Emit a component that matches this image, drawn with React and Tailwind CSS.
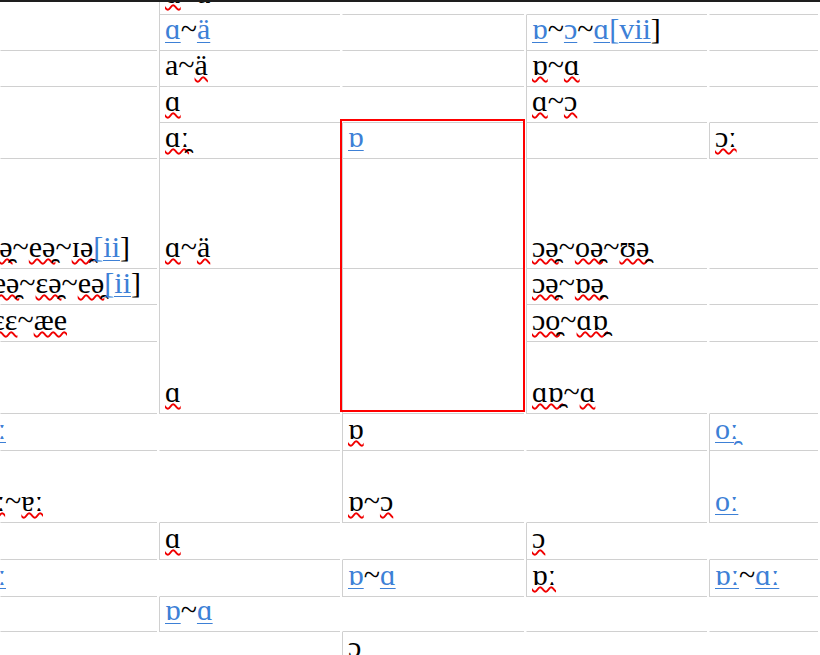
const BR = '\u032F';

// red spell-check squiggle
function Sq({ children }) {
  return (
    <span className="underline decoration-wavy decoration-[#f00000] decoration-[1.5px] underline-offset-[1px] [text-decoration-skip-ink:none]">
      {children}
    </span>
  );
}

// blue link
function A({ children }) {
  return <span className="text-[#3d80d6] underline decoration-1 underline-offset-[3px]">{children}</span>;
}

function Cell({ pos, line = false, bottom = true, end, children }) {
  return (
    <div
      className={`mr-[2px] flex flex-col justify-end pl-[5px] border-l border-[#d0d0d0] ${line ? '' : 'border-l-transparent'} ${bottom ? 'border-b pb-[6px]' : ''} ${pos}`}
    >
      {end ? (
        <div className={`flex justify-end whitespace-nowrap ${end}`}>
          <span>{children}</span>
        </div>
      ) : (
        <div className="whitespace-nowrap">{children}</div>
      )}
    </div>
  );
}

export default function App() {
  return (
    <div className="relative h-[655px] w-[820px] overflow-hidden bg-white text-black">
      <div className="absolute left-0 right-0 top-0 z-10 h-[2px] bg-[#1e1e1e]" />

      <div className="mt-[-21px] grid grid-cols-[159px_183px_184px_183px_1fr] grid-rows-[36px_36px_36px_36px_36px_110px_36px_37px_72px_37px_72px_37px_37px_35px_36px] [font-family:'Liberation_Serif','DejaVu_Serif',serif] text-[30px] leading-[30px]">
        {/* column 0 */}
        <Cell pos="col-start-1 row-start-1 row-span-2" />
        <Cell pos="col-start-1 row-start-3" />
        <Cell pos="col-start-1 row-start-4 row-span-2" />
        <Cell pos="col-start-1 row-start-6" end="pr-[27px]">
          <Sq>ə{BR}</Sq>~<Sq>eə{BR}</Sq>~<Sq>ɪə{BR}</Sq>
          <A>[ii</A>]
        </Cell>
        <Cell pos="col-start-1 row-start-7" end="pr-[16px]">
          <Sq>eə{BR}</Sq>~<Sq>ɛə{BR}</Sq>~<Sq>eə{BR}</Sq>
          <A>[ii</A>]
        </Cell>
        <Cell pos="col-start-1 row-start-8" end="pr-[90px]">
          <Sq>ɛɛ</Sq>~<Sq>æe</Sq>
        </Cell>
        <Cell pos="col-start-1 row-start-9" />
        <Cell pos="col-start-1 row-start-10" end="pr-[153px]">
          <A>eː</A>
        </Cell>
        <Cell pos="col-start-1 row-start-11" end="pr-[114px]">
          <Sq>ɐː</Sq>~<Sq>ɐː</Sq>
        </Cell>
        <Cell pos="col-start-1 row-start-12" />
        <Cell pos="col-start-1 row-start-13" end="pr-[153px]">
          <A>eː</A>
        </Cell>
        <Cell pos="col-start-1 row-start-14" />
        <Cell pos="col-start-1 row-start-15" bottom={false} />

        {/* column 1 */}
        <Cell pos="col-start-2 row-start-1 pb-[4px]" line>
          <Sq>ɑ</Sq>~ä
        </Cell>
        <Cell pos="col-start-2 row-start-2" line>
          <A>ɑ</A>~<A>ä</A>
        </Cell>
        <Cell pos="col-start-2 row-start-3" line>
          a~<Sq>ä</Sq>
        </Cell>
        <Cell pos="col-start-2 row-start-4" line>
          <Sq>ɑ</Sq>
        </Cell>
        <Cell pos="col-start-2 row-start-5" line>
          <Sq>ɑː{BR}</Sq>
        </Cell>
        <Cell pos="col-start-2 row-start-6" line>
          <Sq>ɑ</Sq>~<Sq>ä</Sq>
        </Cell>
        <Cell pos="col-start-2 row-start-7 row-span-3" line>
          <Sq>ɑ</Sq>
        </Cell>
        <Cell pos="col-start-2 row-start-10" />
        <Cell pos="col-start-2 row-start-11" />
        <Cell pos="col-start-2 row-start-12" line>
          <Sq>ɑ</Sq>
        </Cell>
        <Cell pos="col-start-2 row-start-13" />
        <Cell pos="col-start-2 row-start-14" line>
          <A>ɒ</A>~<A>ɑ</A>
        </Cell>
        <Cell pos="col-start-2 row-start-15" bottom={false} />

        {/* column 2 */}
        <Cell pos="col-start-3 row-start-1" />
        <Cell pos="col-start-3 row-start-2" />
        <Cell pos="col-start-3 row-start-3" />
        <Cell pos="col-start-3 row-start-4" />
        <Cell pos="col-start-3 row-start-5" line>
          <A>ɒ</A>
        </Cell>
        <Cell pos="col-start-3 row-start-6" line />
        <Cell pos="col-start-3 row-start-7 row-span-3" line />
        <Cell pos="col-start-3 row-start-10" line>
          <Sq>ɒ</Sq>
        </Cell>
        <Cell pos="col-start-3 row-start-11" line>
          <Sq>ɒ</Sq>~<Sq>ɔ</Sq>
        </Cell>
        <Cell pos="col-start-3 row-start-12" />
        <Cell pos="col-start-3 row-start-13" line>
          <A>ɒ</A>~<A>ɑ</A>
        </Cell>
        <Cell pos="col-start-3 row-start-14" />
        <Cell pos="col-start-3 row-start-15 pb-[6px]" line bottom={false}>
          <Sq>ɔ</Sq>
        </Cell>

        {/* column 3 */}
        <Cell pos="col-start-4 row-start-1" />
        <Cell pos="col-start-4 row-start-2" line>
          <A>ɒ</A>~<A>ɔ</A>~<A>ɑ[vii</A>]
        </Cell>
        <Cell pos="col-start-4 row-start-3" line>
          <Sq>ɒ</Sq>~<Sq>ɑ</Sq>
        </Cell>
        <Cell pos="col-start-4 row-start-4" line>
          <Sq>ɑ</Sq>~<Sq>ɔ</Sq>
        </Cell>
        <Cell pos="col-start-4 row-start-5" line />
        <Cell pos="col-start-4 row-start-6" line>
          <Sq>ɔə{BR}</Sq>~<Sq>oə{BR}</Sq>~<Sq>ʊə{BR}</Sq>
        </Cell>
        <Cell pos="col-start-4 row-start-7" line>
          <Sq>ɔə{BR}</Sq>~<Sq>ɒə{BR}</Sq>
        </Cell>
        <Cell pos="col-start-4 row-start-8" line>
          <Sq>ɔo{BR}</Sq>~<Sq>ɑɒ{BR}</Sq>
        </Cell>
        <Cell pos="col-start-4 row-start-9" line>
          <Sq>ɑɒ{BR}</Sq>~<Sq>ɑ</Sq>
        </Cell>
        <Cell pos="col-start-4 row-start-10" />
        <Cell pos="col-start-4 row-start-11" />
        <Cell pos="col-start-4 row-start-12" line>
          <Sq>ɔ</Sq>
        </Cell>
        <Cell pos="col-start-4 row-start-13" line>
          <Sq>ɒː</Sq>
        </Cell>
        <Cell pos="col-start-4 row-start-14" />
        <Cell pos="col-start-4 row-start-15" bottom={false} />

        {/* column 4 */}
        <Cell pos="col-start-5 row-start-1" />
        <Cell pos="col-start-5 row-start-2" />
        <Cell pos="col-start-5 row-start-3" />
        <Cell pos="col-start-5 row-start-4" />
        <Cell pos="col-start-5 row-start-5" line>
          <Sq>ɔː</Sq>
        </Cell>
        <Cell pos="col-start-5 row-start-6" />
        <Cell pos="col-start-5 row-start-7" />
        <Cell pos="col-start-5 row-start-8" />
        <Cell pos="col-start-5 row-start-9" />
        <Cell pos="col-start-5 row-start-10" line>
          <A>oː{BR}</A>
        </Cell>
        <Cell pos="col-start-5 row-start-11" line>
          <A>oː</A>
        </Cell>
        <Cell pos="col-start-5 row-start-12" />
        <Cell pos="col-start-5 row-start-13" line>
          <A>ɒː</A>~<A>ɑː</A>
        </Cell>
        <Cell pos="col-start-5 row-start-14" />
        <Cell pos="col-start-5 row-start-15" bottom={false} />
      </div>

      {/* selection frame */}
      <div className="absolute left-[340px] top-[119px] h-[293px] w-[185px] border-2 border-[#ff0000]" />
    </div>
  );
}
